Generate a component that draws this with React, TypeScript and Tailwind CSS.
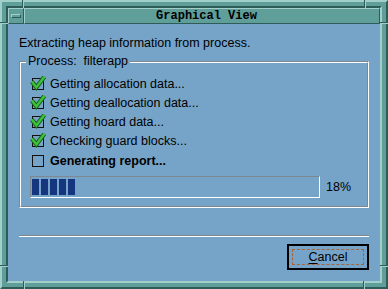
import React from "react";

const rows = [
  { label: "Getting allocation data...", done: true },
  { label: "Getting deallocation data...", done: true },
  { label: "Getting hoard data...", done: true },
  { label: "Checking guard blocks...", done: true },
  { label: "Generating report...", done: false },
];

function CheckBox({ checked }: { checked: boolean }) {
  return (
    <span className="relative inline-block h-[12px] w-[12px] shrink-0 border border-[#111]">
      {checked && (
        <svg width="16" height="16" viewBox="0 0 16 16" className="absolute left-[-3px] top-[-3px]">
          <polyline points="1.8,5.6 6.4,11.4 14.4,0.8" fill="none" stroke="#1b651b" strokeWidth="4.4" strokeLinejoin="miter" />
          <polyline points="1.8,5.6 6.4,11.4 14.4,0.8" fill="none" stroke="#3cc23c" strokeWidth="2.4" strokeLinejoin="miter" />
        </svg>
      )}
    </span>
  );
}

// grooves in the window frame that mark the resize corners
function Notch({ className }: { className: string }) {
  return <div className={`absolute border-[#2e5c58] ${className}`} />;
}

export default function App() {
  const blocks = [0, 1, 2, 3, 4];
  return (
    <div className="relative h-[289px] w-[388px] border-2 border-t-[#a3cfca] border-l-[#a3cfca] border-b-[#2e5c58] border-r-[#2e5c58] bg-[#5f9e99] p-[4px] font-['Liberation_Sans',Arial,sans-serif] text-[12.5px] text-black">
      <Notch className="left-[20px] top-[-2px] h-[8px] w-[2px] border-l bg-[#a3cfca]" />
      <Notch className="right-[20px] top-[-2px] h-[8px] w-[2px] border-l bg-[#a3cfca]" />
      <Notch className="left-[-2px] top-[20px] h-[2px] w-[8px] border-t bg-[#a3cfca]" />
      <Notch className="right-[-2px] top-[20px] h-[2px] w-[8px] border-t bg-[#a3cfca]" />
      <Notch className="bottom-[20px] left-[-2px] h-[2px] w-[8px] border-t bg-[#a3cfca]" />
      <Notch className="bottom-[20px] right-[-2px] h-[2px] w-[8px] border-t bg-[#a3cfca]" />
      <Notch className="bottom-[-2px] left-[21px] h-[8px] w-[2px] border-l bg-[#a3cfca]" />
      <Notch className="bottom-[-2px] right-[21px] h-[8px] w-[2px] border-l bg-[#a3cfca]" />

      <div className="flex h-full flex-col border-2 border-t-[#2e5c58] border-l-[#2e5c58] border-b-[#a3cfca] border-r-[#a3cfca]">
        {/* title bar */}
        <div className="flex h-[16px] shrink-0">
          <div className="flex w-[16px] items-center justify-center border border-t-[#a3cfca] border-l-[#a3cfca] border-b-[#2e5c58] border-r-[#2e5c58]">
            <span className="h-[4px] w-[10px] border border-t-[#a3cfca] border-l-[#a3cfca] border-b-[#2e5c58] border-r-[#2e5c58]" />
          </div>
          <div className="flex flex-1 items-center justify-center border border-t-[#a3cfca] border-l-[#a3cfca] border-b-[#2e5c58] border-r-[#2e5c58] pl-[9px] font-['Liberation_Mono',monospace] text-[12px] font-bold leading-none">
            Graphical View
          </div>
        </div>

        {/* client area */}
        <div className="flex flex-1 flex-col bg-[#76a4c9] px-[11px] pt-[12px]">
          <p className="leading-[14px]">Extracting heap information from process.</p>

          <div className="relative mt-[11px] border border-t-[#7f8790] border-l-[#7f8790] border-b-white border-r-white">
            <span className="absolute left-[6px] top-[-8px] bg-[#76a4c9] px-[2px] leading-[14px] whitespace-pre">
              Process:  filterapp
            </span>
            <div className="border border-t-white border-l-white border-b-[#7f8790] border-r-[#7f8790] pb-[8px] pl-[9px] pt-[11px]">
              {rows.map((r, i) => (
                <div
                  key={r.label}
                  className={`ml-[2px] flex h-[19px] items-center gap-[6px] ${i === rows.length - 1 ? "mt-[1px] font-bold" : ""}`}
                >
                  <CheckBox checked={r.done} />
                  <span className="leading-[14px]">{r.label}</span>
                </div>
              ))}
              <div className="mt-[6px] flex items-center gap-[6px]">
                <div className="flex h-[22px] w-[290px] gap-[2px] border border-t-[#7f8790] border-l-[#7f8790] border-b-white border-r-white pl-[1px] pt-[2px]">
                  {blocks.map((b) => (
                    <span key={b} className="h-[16px] w-[7px] bg-[#15367f]" />
                  ))}
                </div>
                <span className="leading-[14px]">18%</span>
              </div>
            </div>
          </div>

          <div className="mt-[27px] border-t border-b border-t-[#7f8790] border-b-white" />

          <div className="mt-[7px] flex justify-end">
            <button className="flex h-[26px] w-[82px] border-2 border-black p-[3px]">
              <span className="flex h-full w-full items-center justify-center border border-dashed border-[#a8653a] leading-[14px]">
                <span className="underline underline-offset-2">C</span>ancel
              </span>
            </button>
          </div>
        </div>
      </div>
    </div>
  );
}
